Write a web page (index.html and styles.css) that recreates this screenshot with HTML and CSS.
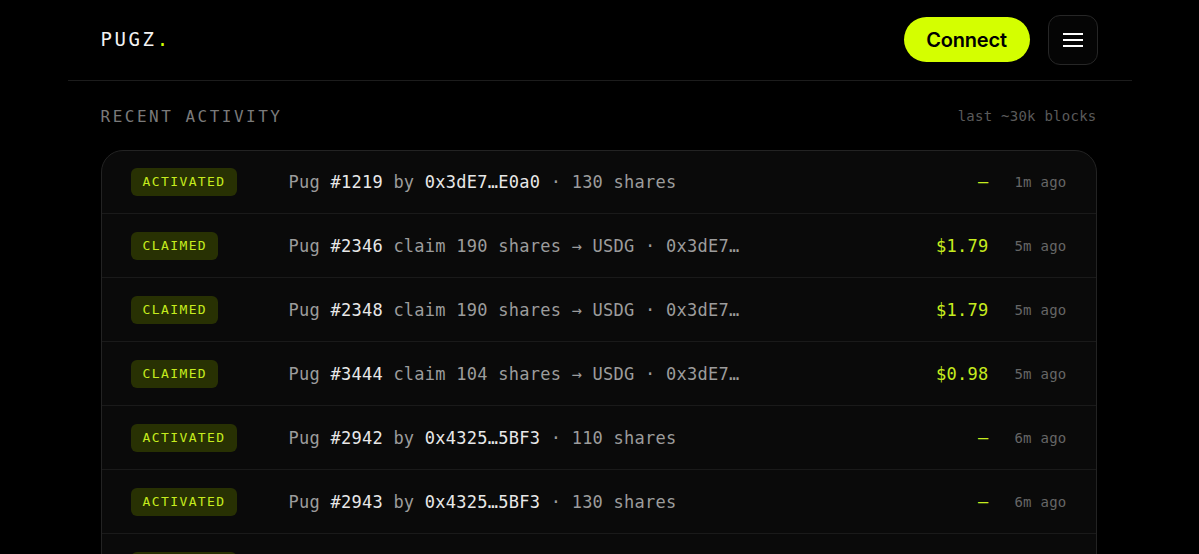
FILE: index.html
```html
<!DOCTYPE html>
<html lang="en">
<head>
<meta charset="utf-8">
<title>PUGZ</title>
<link rel="stylesheet" href="styles.css">
</head>
<body>
<div class="page">
  <header class="topbar">
    <div class="logo">PUGZ<span class="dot">.</span></div>
    <div class="actions">
      <button class="connect">Connect</button>
      <button class="menu" aria-label="Menu">
        <svg width="20" height="14" viewBox="0 0 20 14"><path d="M0 1h20M0 7h20M0 13h20" stroke="#fff" stroke-width="2"/></svg>
      </button>
    </div>
  </header>
  <main class="content">
    <div class="section-head">
      <h2 class="title">RECENT ACTIVITY</h2>
      <span class="meta">last ~30k blocks</span>
    </div>
    <div class="card">
      <div class="row">
        <span class="badge">ACTIVATED</span>
        <span class="desc">Pug <b>#1219</b> by <b>0x3dE7…E0a0</b> · 130 shares</span>
        <span class="amount">—</span>
        <span class="time">1m ago</span>
      </div>
      <div class="row">
        <span class="badge">CLAIMED</span>
        <span class="desc">Pug <b>#2346</b> claim 190 shares → USDG · 0x3dE7…</span>
        <span class="amount">$1.79</span>
        <span class="time">5m ago</span>
      </div>
      <div class="row">
        <span class="badge">CLAIMED</span>
        <span class="desc">Pug <b>#2348</b> claim 190 shares → USDG · 0x3dE7…</span>
        <span class="amount">$1.79</span>
        <span class="time">5m ago</span>
      </div>
      <div class="row">
        <span class="badge">CLAIMED</span>
        <span class="desc">Pug <b>#3444</b> claim 104 shares → USDG · 0x3dE7…</span>
        <span class="amount">$0.98</span>
        <span class="time">5m ago</span>
      </div>
      <div class="row">
        <span class="badge">ACTIVATED</span>
        <span class="desc">Pug <b>#2942</b> by <b>0x4325…5BF3</b> · 110 shares</span>
        <span class="amount">—</span>
        <span class="time">6m ago</span>
      </div>
      <div class="row">
        <span class="badge">ACTIVATED</span>
        <span class="desc">Pug <b>#2943</b> by <b>0x4325…5BF3</b> · 130 shares</span>
        <span class="amount">—</span>
        <span class="time">6m ago</span>
      </div>
      <div class="row">
        <span class="badge">ACTIVATED</span>
        <span class="desc">Pug <b>#2944</b> by <b>0x4325…5BF3</b> · 130 shares</span>
        <span class="amount">—</span>
        <span class="time">6m ago</span>
      </div>
    </div>
  </main>
</div>
</body>
</html>
```
FILE: styles.css
```css
* { box-sizing: border-box; }
html, body { margin: 0; background: #000; }
body {
  font-family: "DejaVu Sans Mono", "Liberation Mono", monospace;
  color: #e6e6e6;
  overflow: hidden;
}
.page {
  max-width: 1064px;
  margin: 0 auto;
}
.topbar {
  height: 81px;
  display: flex;
  align-items: center;
  justify-content: space-between;
  padding: 0 34px 0 33px;
  border-bottom: 1px solid #1c1c1c;
}
.logo {
  font-size: 19px;
  letter-spacing: 2.6px;
  color: #f2f2f2;
  margin-top: -2px;
}
.logo .dot { color: #d4ff00; }
.actions {
  display: flex;
  align-items: center;
  gap: 18px;
  margin-top: -1px;
}
.connect {
  height: 45px;
  width: 126px;
  border: none;
  border-radius: 23px;
  background: #d4ff00;
  color: #000;
  font-family: Inter, "Liberation Sans", sans-serif;
  font-weight: 600;
  font-size: 20px;
  letter-spacing: -0.2px;
  cursor: pointer;
}
.menu {
  width: 50px;
  height: 50px;
  border: 1px solid #262626;
  border-radius: 12px;
  background: #050505;
  display: flex;
  align-items: center;
  justify-content: center;
  padding: 0;
}
.content { padding: 0 35px 0 33px; }
.section-head {
  display: flex;
  align-items: center;
  justify-content: space-between;
  margin-top: 25px;
  height: 20px;
  margin-bottom: 24px;
}
.title {
  margin: 0;
  font-weight: normal;
  font-size: 16px;
  letter-spacing: 2.5px;
  color: #7a7a7a;
}
.meta {
  font-size: 14px;
  letter-spacing: 0.25px;
  color: #5a5a5a;
}
.card {
  border: 1px solid #232323;
  border-radius: 22px;
  background: #0a0a0a;
  overflow: hidden;
}
.row {
  display: grid;
  grid-template-columns: 158px 1fr auto 78px;
  align-items: center;
  height: 64px;
  padding: 0 29px;
  border-bottom: 1px solid #1a1a1a;
}
.row:first-child { height: 63px; }
.badge {
  justify-self: start;
  background: #283103;
  color: #c6ec1e;
  font-size: 13px;
  letter-spacing: 1.4px;
  padding: 0 11px 0 12px;
  height: 28px;
  line-height: 28px;
  border-radius: 6px;
}
.desc {
  font-size: 17px;
  letter-spacing: 0.25px;
  color: #9c9c9c;
  white-space: nowrap;
  overflow: hidden;
}
.desc b { font-weight: normal; color: #e8e8e8; }
.amount {
  font-size: 17px;
  letter-spacing: 0.25px;
  color: #c6ec1e;
  text-align: right;
}
.time {
  font-size: 14px;
  letter-spacing: 0.25px;
  color: #666;
  text-align: right;
}
```
